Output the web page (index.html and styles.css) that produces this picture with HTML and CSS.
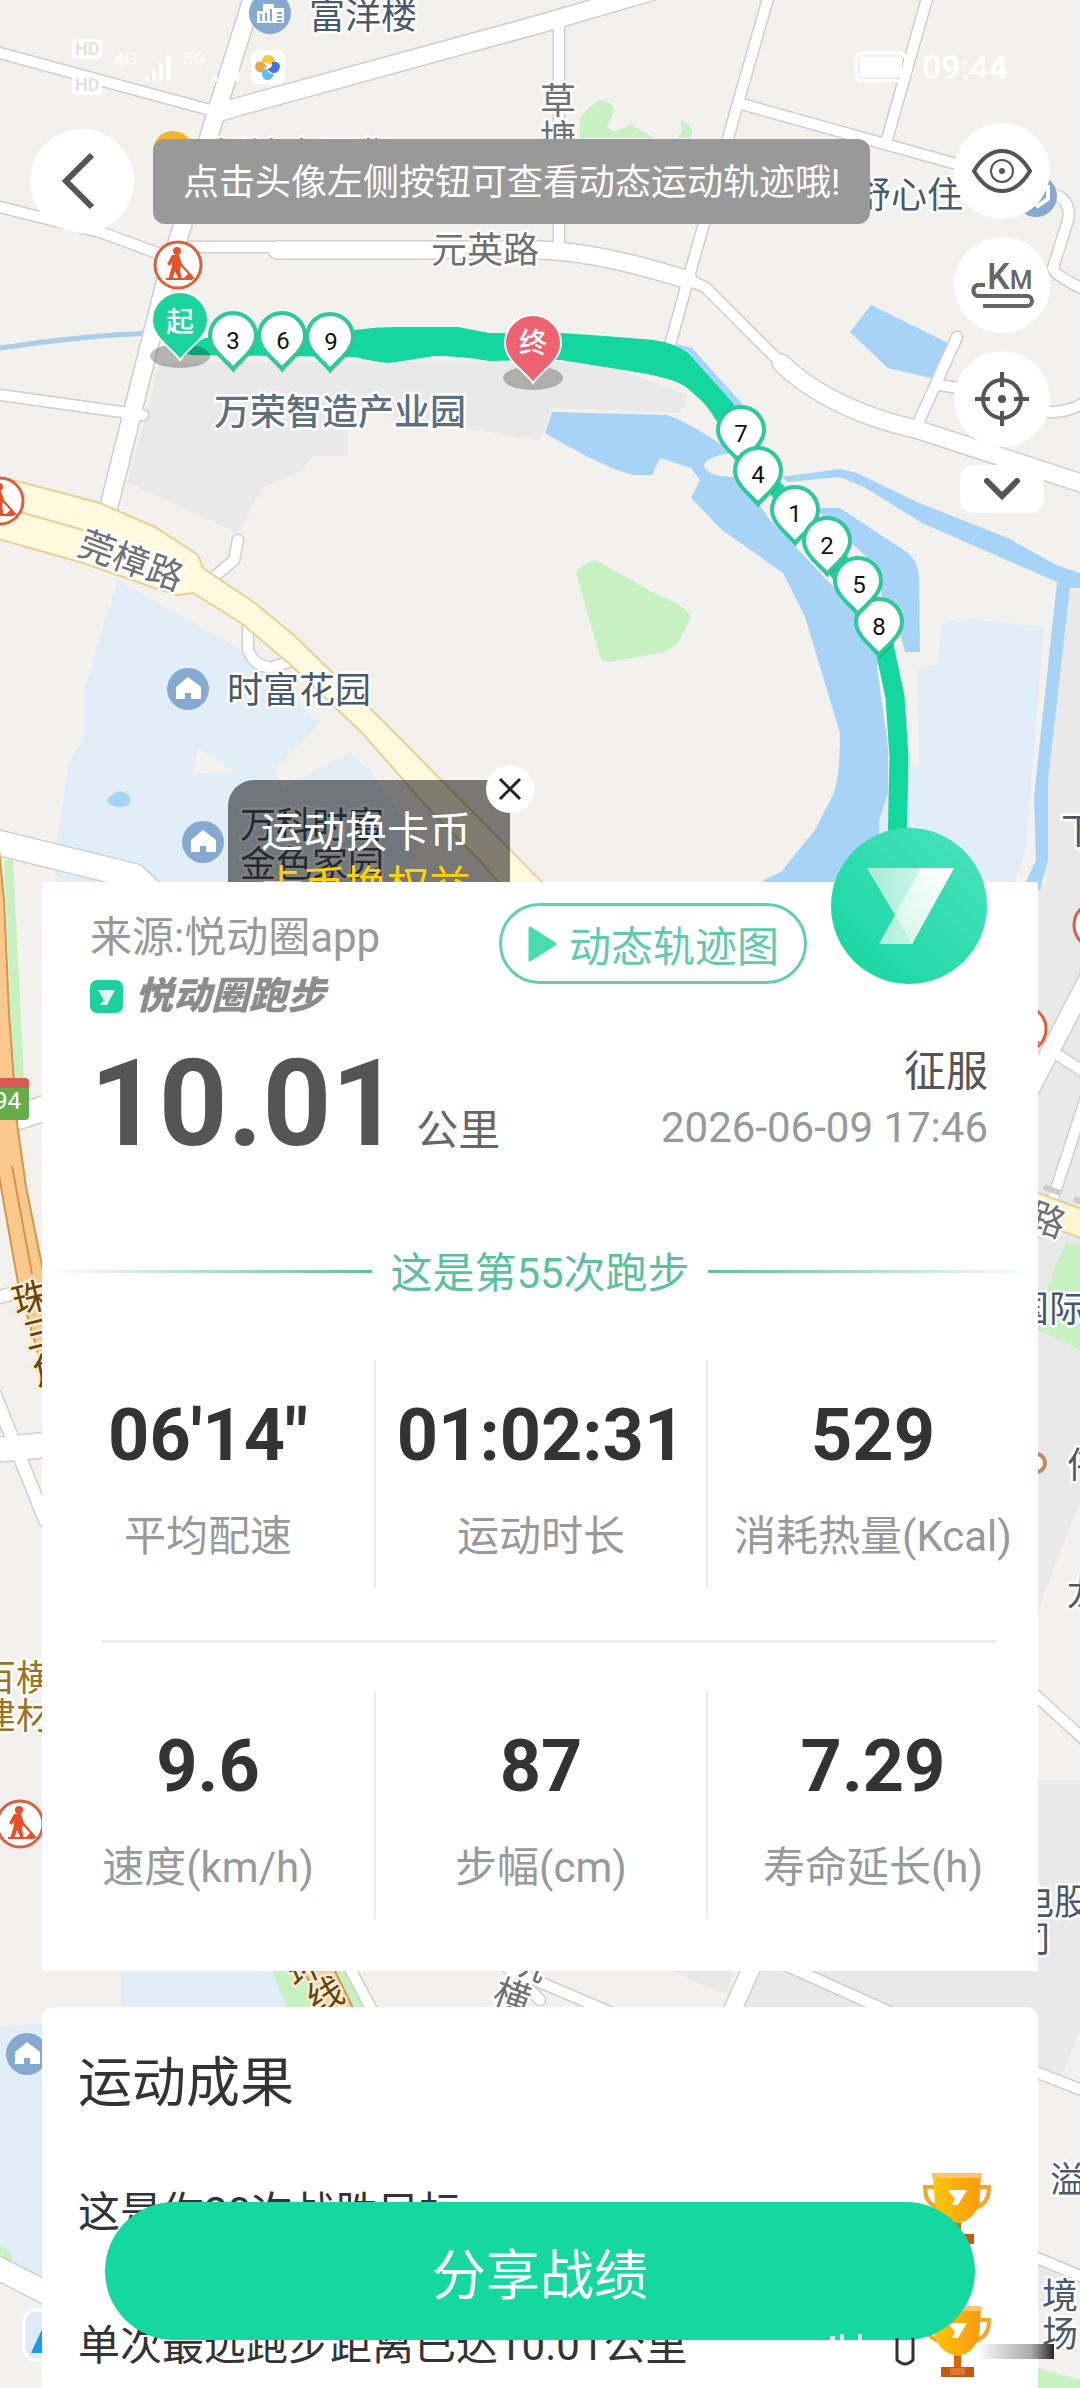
FILE: index.html
```html
<!DOCTYPE html>
<html lang="zh-CN">
<head>
<meta charset="utf-8">
<meta name="viewport" content="width=device-width, initial-scale=1">
<title>悦动圈跑步</title>
<link rel="stylesheet" href="styles.css">
</head>
<body>

<svg class="map" viewBox="0 0 1080 2388" preserveAspectRatio="xMidYMin slice" aria-hidden="true">
  <defs>
    <symbol id="work" viewBox="0 0 50 50" overflow="visible">
      <circle cx="25" cy="25" r="23" fill="#fff" stroke="#dc5f3e" stroke-width="3"/>
      <circle cx="24" cy="11" r="4" fill="#e8502a"/>
      <path d="M19 15l7 0 3 9 8 9 5 6h-12l5-5-7-8-1 4 2 10h-3l-4-9-3 9h-4l4-14v-4l-2 4-3-2z M13 38h26v2H13z" fill="#e8502a"/>
    </symbol>
    <symbol id="home" viewBox="0 0 42 42">
      <circle cx="21" cy="21" r="21" fill="#86a9d1"/>
      <path d="M21 9l13 10v12H24v-6h-6v6H9V19z" fill="#fff"/>
    </symbol>
    <symbol id="pin" viewBox="0 0 52 62" overflow="visible">
      <path d="M26 59C20 51 3 39 3 25a23 23 0 0 1 46 0C49 39 32 51 26 59z" fill="#000" opacity=".15" transform="translate(1 3)"/>
      <path d="M26 58C20 50 3 39 3 25a23 23 0 0 1 46 0C49 39 32 50 26 58z" fill="#fff" stroke="#2dc99c" stroke-width="4"/>
    </symbol>
  </defs>

  <rect width="1080" height="2388" fill="#f2f1ed"/>

  <!-- blocks -->
  <g fill="#e9e9e9">
    <path d="M160 362L600 362 688 395 681 413 552 408 540 440 348 410V456H313L303 470 263 487 238 533 127 482z"/>
    <path d="M1070 590H1080V1500L1038 1610V885H1046L1048 780z"/>
    <path d="M750 1960H1080V2030L1060 2080 740 2010z"/>
    <path d="M670 1971H733L728 1995zM1038 2258L1075 2275 1060 2310H1038zM1038 1780H1080V2000H1038z"/>
  </g>
  <g fill="#e1eef8">
    <path d="M118 580L241 650 320 723 275 770 282 787 351 753 372 773 420 840 400 890H55L57 840 69 763 84 737V690L90 670z"/>
    <path d="M941 625L957 618 1044 627 1026 847 1015 885H879V767H919L917 670 938 663z"/>
    <path d="M120 1960H290V2010H122zM0 2028L42 2023V2280L0 2260z"/>
  </g>
  <path d="M198 747L240 774 193 773z" fill="#f2f1ed"/>
  <path d="M108 799q12-14 22-2 3 10-10 10-16-2-12-8z" fill="#a7d3f7"/>
  <g fill="#c8f1c1">
    <path d="M576 573Q578 566 595 560L654 593Q689 607 691 618L678 643Q670 650 660 653L610 662Q602 662 600 657z"/>
    <path d="M579 138L581 117Q592 102 602 100 613 101 614 112L607 126Q611 134 620 129L631 125 654 138z"/>
    <path d="M681 120Q697 128 690 138H677L682 132z"/>
    <path d="M4 860H13L24 1080H13z"/>
    <path d="M270 1965H345L366 2010H288z"/>
    <path d="M1066 1242L1080 1245V1350L1038 1330V1310zM0 2246q14 4 12 14l-12-2zM1038 2368L1080 2380V2388H1038z"/>
  </g>

  <!-- water -->
  <g fill="#a7d3f7">
    <path d="M552 412L667 415Q684 420 722 445L738 452Q705 456 704 466 706 476 733 477L760 507 815 508 840 508 908 553Q918 562 919 577L920 652H905L895 615 877 667 888 747V793L879 820V893H758L764 880 781 872 815 830 834 793Q840 775 840 733L805 617 783 573 722 530 691 498 700 480 691 468 660 458 652 475H633Q600 466 545 433z"/>
    <path d="M781 477L840 469 857 473 919 503 1008 538 1056 565 1080 573V588H1070L1048 780V860L1040 890H1022L1036 860 1034 797 1057 582 922 523 864 487 840 477 788 482z"/>
    <path d="M871 305L948 343 931 378 888 368 850 332z"/>
    <path d="M676 344L692 348 744 406 730 412z"/>
  </g>
  <path d="M756 500L815 508 880 570 884 640 770 520z" fill="#f2f1ed"/>
  <path d="M0 348Q80 336 150 333" fill="none" stroke="#a9cdea" stroke-width="5"/>

  <!-- roads: casing first, then fill -->
  <g fill="none" stroke="#cfcfcf" stroke-linejoin="round" stroke-linecap="round">
    <g stroke-width="20">
      <path d="M255-10L217 110 165 283 108 510"/>
      <path d="M217 113L241 106 540 24 650-8"/>
      <path d="M277 250H540Q600 252 688 280"/>
      <path d="M781 363Q830 410 919 430L1090 486"/>
      <path d="M-5 842L134 876 160 900" stroke-width="27"/>
      <path d="M-10 2264L60 2300" stroke-width="25"/>
      <path d="M755 1960L728 2020M1030 1090L1090 975"/>
    </g>
    <g stroke-width="13">
      <path d="M0 53L210 110M0 207L103 233 160 254M190 247H277M0 395L143 415M559 24V250"/>
      <path d="M769-5L738 103 688 280 670 345M738 103L960 165M928-5L886 143"/>
      <path d="M688 280L705 287 781 363M1050 193Q1072 198 1068 220L1053 268Q1054 276 1090 292"/>
      <path d="M957 337L915 430M940 385L1000 395Q1050 425 1085 402"/>
      <path d="M238 540L234 560 214 577M248 625V650Q255 668 272 667L295 660"/>
      <path d="M348 1965L372 2010M505 1965L540 2000M530 1978L610 2012M785 1965L890 2012"/>
      <path d="M1058 1055L1090 1076M1090 1085L1042 1232M1030 1690L1090 1745M1030 2070L1090 2093M1030 2255L1090 2280"/>
      <path d="M-5 1298L45 1285M-5 1395L45 1520" stroke-width="15"/>
      <path d="M-5 1450L45 1445M-5 1125L45 1108" stroke-width="27"/>
    </g>
  </g>
  <g fill="none" stroke="#fff" stroke-linejoin="round" stroke-linecap="round">
    <g stroke-width="17">
      <path d="M255-10L217 110 165 283 108 510"/>
      <path d="M217 113L241 106 540 24 650-8"/>
      <path d="M277 250H540Q600 252 688 280"/>
      <path d="M781 363Q830 410 919 430L1090 486"/>
      <path d="M-5 842L134 876 160 900" stroke-width="24"/>
      <path d="M-10 2264L60 2300" stroke-width="22"/>
      <path d="M755 1960L728 2020M1030 1090L1090 975"/>
    </g>
    <g stroke-width="10">
      <path d="M0 53L210 110M0 207L103 233 160 254M190 247H277M0 395L143 415M559 24V250"/>
      <path d="M769-5L738 103 688 280 670 345M738 103L960 165M928-5L886 143"/>
      <path d="M688 280L705 287 781 363M1050 193Q1072 198 1068 220L1053 268Q1054 276 1090 292"/>
      <path d="M957 337L915 430M940 385L1000 395Q1050 425 1085 402"/>
      <path d="M238 540L234 560 214 577M248 625V650Q255 668 272 667L295 660"/>
      <path d="M348 1965L372 2010M505 1965L540 2000M530 1978L610 2012M785 1965L890 2012"/>
      <path d="M1058 1055L1090 1076M1090 1085L1042 1232M1030 1690L1090 1745M1030 2070L1090 2093M1030 2255L1090 2280"/>
      <path d="M-5 1298L45 1285M-5 1395L45 1520" stroke-width="12"/>
      <path d="M-5 1450L45 1445M-5 1125L45 1108" stroke-width="24"/>
    </g>
  </g>

  <!-- main roads -->
  <path d="M-5 478L21 482 100 503 155 527 198 555 203 568 255 603 296 637 337 677 379 717 540 880 550 890H505L482 863 430 810 362 733 293 667 241 623 193 593 177 595 152 587 83 563-5 538z" fill="#fffade" stroke="#edce93" stroke-width="2"/>
  <path d="M20 512L83 530" stroke="#edce93" stroke-width="2"/>
  <path d="M1030 1190L1090 1212V1242L1030 1218z" fill="#fff6cf" stroke="#e8cf98" stroke-width="2"/>
  <path d="M1044 1187l16 6M1074 1199l14 5" stroke="#ccc" stroke-width="6"/>
  <path d="M-4 820L4 900 9 1013 17 1123 26 1187 46 1285 60 1350 40 1360 18 1283-2 1170z" fill="#fbc88e" stroke="#d8944a" stroke-width="2"/>
  <path d="M12 1166L32 1274" stroke="#d8944a" stroke-width="2"/>
  <path d="M300 1965H332L354 2010H326z" fill="#fbd0a0" stroke="#d8944a" stroke-width="2"/>

  <!-- labels -->
  <g class="label">
    <text x="309" y="29">富洋楼</text>
    <text x="855" y="208">舒心住宅</text>
    <text x="214" y="425" class="area">万荣智造产业园</text>
    <text x="227" y="703">时富花园</text>
    <text x="240" y="838">万科时富</text>
    <text x="240" y="877">金色家园</text>
    <text x="1061" y="844">下</text>
    <text x="1013" y="1322">国际</text>
    <text x="1067" y="1478">伟</text>
    <text x="1067" y="1606">龙</text>
    <text x="1018" y="1915">电股</text>
    <text x="1015" y="1952">司</text>
    <text x="1050" y="2193">溢</text>
    <text x="1042" y="2309">境</text>
    <text x="1042" y="2347">场</text>
  </g>
  <g class="label road">
    <text x="431" y="263">元英路</text>
    <text x="540" y="114">草</text>
    <text x="540" y="151">塘</text>
    <text x="76" y="554" transform="rotate(20 76 554)">莞樟路</text>
    <text x="1026" y="1226" transform="rotate(20 1026 1226)">路</text>
    <text x="508" y="1970" transform="rotate(20 508 1970)">坑</text>
    <text x="491" y="2002" transform="rotate(20 491 2002)">横</text>
  </g>
  <g class="label brown">
    <text x="16" y="1315" transform="rotate(-14 16 1315)">珠</text>
    <text x="27" y="1350" transform="rotate(-14 27 1350)">三</text>
    <text x="36" y="1386" transform="rotate(-14 36 1386)">角</text>
    <text x="294" y="1987" transform="rotate(-24 294 1987)">环</text>
    <text x="314" y="2014" transform="rotate(-24 314 2014)">线</text>
  </g>
  <g class="label shop">
    <text x="212" y="169">新铭宏百货</text>
    <text x="-20" y="1691">百横</text>
    <text x="-20" y="1729">建材</text>
  </g>

  <circle cx="173" cy="151" r="20" fill="#f7b52c"/>
  <circle cx="270" cy="13" r="21" fill="#86a9d1"/>
  <path d="M257 23V11h6V4h11v4h10v15z" fill="#fff"/>
  <path d="M261 21v-7M266 21v-8M271 21V9M277 13h5M277 17h5M277 21h5" stroke="#86a9d1" stroke-width="2"/>
  <circle cx="1036" cy="196" r="21" fill="#86a9d1"/>
  <path d="M1048 185v14l-12 8" fill="none" stroke="#fff" stroke-width="4"/>
  <use href="#home" x="167" y="668" width="42" height="42"/>
  <use href="#home" x="182" y="821" width="42" height="42"/>
  <use href="#home" x="6" y="2033" width="42" height="42"/>
  <use href="#work" x="153" y="240" width="50" height="50"/>
  <use href="#work" x="-25" y="476" width="50" height="50"/>
  <use href="#work" x="-5" y="1799" width="50" height="50"/>
  <use href="#work" x="1072" y="900" width="50" height="50"/>
  <use href="#work" x="998" y="1004" width="50" height="50"/>
  <circle cx="1036" cy="1463" r="9" fill="#fff" stroke="#b98d67" stroke-width="4"/>
  <path d="M-5 1078H25q4 0 4 4v6H-5z" fill="#dc5a55"/>
  <path d="M-5 1088H29v28q0 4-4 4H-5z" fill="#63ad4b"/>
  <text x="-6" y="1109" class="badge">94</text>
  <rect x="24" y="2310" width="50" height="50" rx="12" fill="#dfeaf9" stroke="#fff" stroke-width="3"/>
  <path d="M31 2353L44 2325V2353z" fill="#1a9bf0"/>

  <!-- run track -->
  <path d="M180 352L205 338H320L355 330Q375 327 396 327H458L489 333H561L605 336 654 340Q675 343 688 353L733 403 755 445 778 480 810 512 850 560 889 640 885 650 716 420Q705 402 695 395 685 384 671 380 655 375 636 372L561 360H530L489 361Q460 356 434 356 410 360 389 363 370 361 355 357L191 355z" fill="#14d69f"/>
  <path d="M884 645L895 697 899 757 897 850" fill="none" stroke="#14d69f" stroke-width="19"/>
  <g fill="#000" opacity=".25">
    <ellipse cx="180" cy="356" rx="30" ry="12"/>
    <ellipse cx="533" cy="378" rx="30" ry="12"/>
  </g>
  <g stroke="#fff" stroke-width="2">
    <path d="M180 360C172 348 152 338 152 320a28 28 0 0 1 56 0C208 338 188 348 180 360z" fill="#1bd39c"/>
    <path d="M533 383C525 371 505 361 505 343a28 28 0 0 1 56 0C561 361 541 371 533 383z" fill="#ef6270"/>
  </g>
  <g class="flag">
    <text x="180" y="332">起</text>
    <text x="533" y="353">终</text>
  </g>
  <g class="pins">
    <use href="#pin" x="207" y="311" width="52" height="62"/><text x="233" y="349">3</text>
    <use href="#pin" x="256" y="311" width="52" height="62"/><text x="283" y="349">6</text>
    <use href="#pin" x="304" y="312" width="52" height="62"/><text x="331" y="350">9</text>
    <use href="#pin" x="715" y="405" width="52" height="62"/><text x="741" y="442">7</text>
    <use href="#pin" x="732" y="446" width="52" height="62"/><text x="758" y="483">4</text>
    <use href="#pin" x="769" y="485" width="52" height="62"/><text x="795" y="522">1</text>
    <use href="#pin" x="801" y="516" width="52" height="62"/><text x="827" y="554">2</text>
    <use href="#pin" x="853" y="597" width="52" height="62"/><text x="879" y="635">8</text>
    <use href="#pin" x="832" y="556" width="52" height="62"/><text x="859" y="593">5</text>
  </g>
</svg>

<div class="page">

  <div class="statusbar">
    <div class="hd"><span>HD</span><span>HD</span></div>
    <div class="sim">4G</div>
    <svg width="30" height="28" viewBox="0 0 30 28" fill="#fff"><path d="M0 23h4v5H0zM7 17h4v11H7zM14 10h4v18h-4zM21 2h5v26h-5z"/></svg>
    <div class="sim">5G</div>
    <svg width="30" height="28" viewBox="0 0 30 28" fill="#fff"><path d="M0 23h4v5H0zM7 17h4v11H7zM14 10h4v18h-4zM21 2h5v26h-5z"/></svg>
    <svg class="app" width="34" height="34" viewBox="0 0 34 34">
      <rect width="34" height="34" rx="8" fill="#fff"/>
      <path d="M11 14q-1-9 6-9t7 7l-5 3q-3-4-8-1z" fill="#f8c93c"/>
      <path d="M14 22q-9 2-10-5 1-7 7-5l5 4q-4 1-2 6z" fill="#eba544"/>
      <path d="M21 12q7-1 8 4-1 8-8 7l-5-4q6-1 5-7z" fill="#3d74e0"/>
      <path d="M23 24q-2 6-7 6t-5-8l4-4q2 6 8 6z" fill="#5cbcf7"/>
    </svg>
    <svg class="battery" width="60" height="32" viewBox="0 0 60 32">
      <rect x="2" y="2" width="50" height="28" rx="6" fill="none" stroke="#fff" stroke-width="3"/>
      <rect x="6" y="6" width="42" height="20" rx="3" fill="#fff"/>
      <path d="M55 11h3v10h-3z" fill="#fff"/>
    </svg>
    <time>09:44</time>
  </div>

  <header class="header">
    <button type="button" class="round back" aria-label="返回">
      <svg width="40" height="60" viewBox="0 0 40 60"><path d="M30 4L4 30 30 56" fill="none" stroke="#555" stroke-width="6"/></svg>
    </button>
    <p class="toast">点击头像左侧按钮可查看动态运动轨迹哦!</p>
    <div class="tools">
      <button type="button" class="round" aria-label="显示">
        <svg width="60" height="46" viewBox="0 0 60 46" fill="none" stroke="#555" stroke-width="3">
          <path d="M2 23Q14 3 30 3T58 23Q46 43 30 43T2 23z" stroke-width="4"/>
          <circle cx="30" cy="23" r="11" stroke-width="2"/>
          <circle cx="30" cy="23" r="3" fill="#555" stroke="none"/>
        </svg>
      </button>
      <button type="button" class="round" aria-label="公里">
        <svg width="66" height="50" viewBox="0 0 66 50">
          <path d="M16 25H8a6 6 0 0 0 0 11H58a5 5 0 0 1 0 10H14" fill="none" stroke="#666" stroke-width="4"/>
          <text x="18" y="29" class="km">K<tspan class="km-small">M</tspan></text>
        </svg>
      </button>
      <button type="button" class="round" aria-label="定位">
        <svg width="54" height="54" viewBox="0 0 54 54" fill="none" stroke="#555" stroke-width="4">
          <circle cx="27" cy="27" r="19"/>
          <path d="M27 0V15M27 39V54M0 27H15M39 27H54"/>
          <circle cx="27" cy="27" r="4" fill="#555" stroke="none"/>
        </svg>
      </button>
      <button type="button" class="more" aria-label="展开">
        <svg width="36" height="22" viewBox="0 0 36 22"><path d="M3 3L18 18 33 3" fill="none" stroke="#555" stroke-width="6" stroke-linecap="round"/></svg>
      </button>
    </div>
  </header>

  <aside class="promo">
    <div class="promo-text">
      <p>运动换卡币</p>
      <p class="gold">卡币换权益</p>
    </div>
    <button type="button" class="close" aria-label="关闭">
      <svg width="24" height="24" viewBox="0 0 24 24"><path d="M2 2L22 22M22 2L2 22" stroke="#222" stroke-width="3"/></svg>
    </button>
  </aside>

  <section class="card">
    <div class="card-head">
      <div class="source">
        <p>来源:悦动圈app</p>
        <div class="brand">
          <svg width="33" height="33" viewBox="0 0 33 33"><rect width="33" height="33" rx="7" fill="#1bd29f"/><path d="M8 10H25L17 25H10L14 20z" fill="#e3fbf3"/></svg>
          <span>悦动圈跑步</span>
        </div>
      </div>
      <button type="button" class="replay">
        <svg width="30" height="36" viewBox="0 0 30 36"><path d="M3 2L28 18 3 34z" fill="#4adcb0" stroke="#4adcb0" stroke-width="3" stroke-linejoin="round"/></svg>
        动态轨迹图
      </button>
      <svg class="avatar" width="156" height="156" viewBox="0 0 156 156">
        <defs>
          <linearGradient id="av" x1="0" y1="1" x2="1" y2="0"><stop offset="0" stop-color="#14d69f"/><stop offset="1" stop-color="#4ce3bd"/></linearGradient>
          <linearGradient id="ya" x1="0" y1="0" x2="1" y2="0"><stop offset="0" stop-color="#a4ecd5"/><stop offset="1" stop-color="#e6f9f3"/></linearGradient>
          <linearGradient id="yb" x1="1" y1="0" x2="0" y2="1"><stop offset="0" stop-color="#fff"/><stop offset="1" stop-color="#d5f6eb"/></linearGradient>
        </defs>
        <circle cx="78" cy="78" r="78" fill="url(#av)"/>
        <path d="M36 40H123L81 116H48L64 87z" fill="url(#ya)"/>
        <path d="M90 40H123L81 116 64 87z" fill="url(#yb)"/>
      </svg>
    </div>

    <div class="summary">
      <div class="distance"><strong>10.01</strong><span>公里</span></div>
      <div class="who">
        <p class="name">征服</p>
        <time>2026-06-09 17:46</time>
      </div>
    </div>

    <div class="count"><span>这是第55次跑步</span></div>

    <dl class="stats">
      <div><dd>06'14"</dd><dt>平均配速</dt></div>
      <div><dd>01:02:31</dd><dt>运动时长</dt></div>
      <div><dd>529</dd><dt>消耗热量(Kcal)</dt></div>
    </dl>
    <hr>
    <dl class="stats">
      <div><dd>9.6</dd><dt>速度(km/h)</dt></div>
      <div><dd>87</dd><dt>步幅(cm)</dt></div>
      <div><dd>7.29</dd><dt>寿命延长(h)</dt></div>
    </dl>
  </section>

  <section class="card results">
    <h2>运动成果</h2>
    <ul>
      <li>
        <span>这是你20次战胜目标</span>
        <svg class="cup" width="70" height="72" viewBox="0 0 70 72">
          <defs><linearGradient id="gold"><stop offset="0" stop-color="#fdc507"/><stop offset="1" stop-color="#fb9a10"/></linearGradient></defs>
          <path d="M13 15H3q0 18 15 21M57 15H67q0 18-15 21" fill="none" stroke="#f3a52c" stroke-width="4"/>
          <path d="M32 48h7v14h-7z" fill="#d9660f"/>
          <path d="M11 4H59L57 32Q52 48 36 51 18 48 13 32z" fill="url(#gold)"/>
          <path d="M10 1H60V6H10z" fill="#fcc376"/>
          <path d="M26 18H45L36 33H30L33 27z" fill="#fff"/>
          <path d="M19 62H52V72H19z" fill="#c35a12"/><path d="M28 63H43V70H28z" fill="#dd7631"/>
        </svg>
      </li>
      <li>
        <span>单次最远跑步距离已达10.01公里</span>
        <svg class="cup" width="70" height="72" viewBox="0 0 70 72">
          <path d="M13 15H3q0 18 15 21M57 15H67q0 18-15 21" fill="none" stroke="#f3a52c" stroke-width="4"/>
          <path d="M32 48h7v14h-7z" fill="#d9660f"/>
          <path d="M11 4H59L57 32Q52 48 36 51 18 48 13 32z" fill="url(#gold)"/>
          <path d="M10 1H60V6H10z" fill="#fcc376"/>
          <path d="M26 18H45L36 33H30L33 27z" fill="#fff"/>
          <path d="M19 62H52V72H19z" fill="#c35a12"/><path d="M28 63H43V70H28z" fill="#dd7631"/>
        </svg>
      </li>
    </ul>
  </section>
</div>

<button type="button" class="share">分享战绩</button>

<svg class="smudge" width="232" height="34" viewBox="0 0 232 34" aria-hidden="true">
  <defs>
    <linearGradient id="sa"><stop offset="0" stop-color="#fff" stop-opacity="0"/><stop offset=".3" stop-color="#fff" stop-opacity=".9"/><stop offset="1" stop-color="#fff" stop-opacity=".8"/></linearGradient>
    <linearGradient id="sb"><stop offset="0" stop-color="#777" stop-opacity="0"/><stop offset=".7" stop-color="#888" stop-opacity=".7"/><stop offset="1" stop-color="#222"/></linearGradient>
  </defs>
  <path d="M0 6H56V26H0z" fill="url(#sa)"/>
  <path d="M8 2h5v8H8zM18 0h4v10h-4zM36 0h4v10h-4z" fill="#fff" opacity=".8"/>
  <path d="M75 4V26Q83 34 91 26V4" fill="none" stroke="#333" stroke-width="3"/>
  <path d="M155 10H232V25H155z" fill="url(#sb)"/>
</svg>

</body>
</html>
```
FILE: styles.css
```css
* {
  box-sizing: border-box;
}

body {
  margin: 0;
  position: relative;
  font-family: Roboto, "Noto Sans CJK SC", sans-serif;
  font-size: 42px;
  color: #333;
  background: #f2f1ed;
}

p, h2, ul, dl, dd {
  margin: 0;
  padding: 0;
}

button {
  font: inherit;
  border: none;
  padding: 0;
  cursor: pointer;
}

svg {
  display: block;
  flex: none;
}

/* map */
.map {
  position: absolute;
  left: 0;
  top: 0;
  width: 100%;
  height: 100%;
}

.label text {
  font-size: 36px;
  fill: #47596b;
  stroke: #fff;
  stroke-width: 5px;
  stroke-linejoin: round;
  paint-order: stroke;
}

.label .area {
  font-weight: 500;
  fill: #5f6f7f;
}

.road text {
  fill: #707070;
}

.brown text {
  fill: #664410;
  stroke: #fdecd0;
}

.shop text {
  fill: #9a7223;
}

.badge {
  font-size: 24px;
  fill: #fff;
}

.flag text {
  font-size: 28px;
  font-weight: 500;
  fill: #fff;
  text-anchor: middle;
}

.pins text {
  font-size: 24px;
  fill: #111;
  text-anchor: middle;
}

/* page */
.page {
  position: relative;
  display: flex;
  flex-direction: column;
  min-height: 100vh;
}

.statusbar {
  display: flex;
  align-items: center;
  height: 123px;
  padding: 10px 72px 0;
  color: #fff;
  gap: 8px;
}

.hd {
  display: flex;
  flex-direction: column;
  gap: 16px;
  margin-right: 4px;
}

.hd span {
  padding: 0 3px;
  border-radius: 4px;
  background: #fff;
  color: #e4e3df;
  font-size: 18px;
  line-height: 20px;
  font-weight: 700;
}

.sim {
  font-size: 18px;
  line-height: 16px;
  margin-bottom: 16px;
}

.battery {
  margin-left: auto;
}

.statusbar time {
  font-size: 34px;
  font-weight: 500;
  line-height: 40px;
}

.header {
  display: flex;
  align-items: flex-start;
  padding: 0 30px;
}

.round {
  display: flex;
  align-items: center;
  justify-content: center;
  width: 96px;
  height: 96px;
  border-radius: 50%;
  background: #fff;
}

.back {
  flex: none;
  width: 104px;
  height: 104px;
  margin-top: 6px;
}

.toast {
  margin: 16px 0 0 19px;
  padding: 3px 30px 0;
  border-radius: 12px;
  background: #999;
  color: #fff;
  font-size: 36px;
  line-height: 82px;
  white-space: nowrap;
}

.tools {
  display: flex;
  flex-direction: column;
  align-items: center;
  gap: 18px;
  margin-left: auto;
}

.km {
  font-size: 36px;
  font-weight: 500;
  fill: #666;
}

.km-small {
  font-size: 26px;
}

.more {
  display: flex;
  align-items: center;
  justify-content: center;
  width: 84px;
  height: 48px;
  border-radius: 14px;
  background: #fff;
}

.promo {
  position: relative;
  width: 282px;
  height: 102px;
  margin: 267px 0 0 228px;
}

.promo-text {
  height: 100%;
  padding: 26px 0 0 33px;
  overflow: hidden;
  border-radius: 26px 0 0 0;
  background: rgba(0, 0, 0, .5);
  color: #fff;
  line-height: 54px;
}

.promo .gold {
  color: #ffd200;
}

.close {
  position: absolute;
  top: -15px;
  right: -24px;
  display: flex;
  align-items: center;
  justify-content: center;
  width: 48px;
  height: 48px;
  border-radius: 50%;
  background: #fff;
}

/* run card */
.card {
  margin: 0 42px;
  background: #fff;
}

.card-head {
  display: flex;
  align-items: flex-start;
  padding: 0 51px 0 48px;
  gap: 24px;
}

.source {
  flex: 1;
  padding-top: 26px;
  line-height: 60px;
  color: #999;
  white-space: nowrap;
}

.brand {
  display: flex;
  align-items: center;
  gap: 12px;
  margin-top: 10px;
  font-size: 38px;
  line-height: 36px;
  font-weight: 900;
  font-style: italic;
  color: #8c8c8c;
}

.replay {
  display: flex;
  align-items: center;
  justify-content: center;
  gap: 12px;
  width: 308px;
  height: 81px;
  margin-top: 21px;
  border: 3px solid #63cfb1;
  border-radius: 41px;
  background: #fff;
  color: #5fcbac;
  white-space: nowrap;
}

.avatar {
  margin-top: -54px;
}

.summary {
  display: flex;
  justify-content: space-between;
  align-items: flex-start;
  margin-top: 30px;
  padding: 0 50px 0 48px;
}

.distance {
  display: flex;
  align-items: baseline;
  gap: 16px;
  color: #666;
}

.distance strong {
  font-size: 120px;
  line-height: 120px;
  color: #555;
}

.distance span {
  line-height: 60px;
}

.who {
  line-height: 56px;
  text-align: right;
  color: #999;
}

.name {
  color: #555;
}

.count {
  display: flex;
  align-items: center;
  gap: 18px;
  margin-top: 76px;
  line-height: 56px;
  color: #5cbf9f;
}

.count span {
  padding-top: 6px;
}

.count::before,
.count::after {
  content: "";
  flex: 1;
  height: 3px;
  background: linear-gradient(to right, #fff, #5fbf9f);
}

.count::after {
  background: linear-gradient(to left, #fff, #5fbf9f);
}

.stats {
  display: grid;
  grid-template-columns: repeat(3, 1fr);
  margin-top: 58px;
  text-align: center;
}

.stats div {
  display: flex;
  flex-direction: column;
  gap: 35px;
  padding: 40px 0 21px;
  white-space: nowrap;
}

.stats div + div {
  border-left: 2px solid #ebebeb;
}

.stats dd {
  font-size: 72px;
  line-height: 72px;
  font-weight: 700;
}

.stats dt {
  line-height: 60px;
  color: #999;
}

.card hr {
  height: 3px;
  margin: 52px 42px 0 60px;
  border: none;
  background: #ebebeb;
}

.card hr + .stats {
  margin-top: 48px;
  margin-bottom: 52px;
}

/* results card */
.results {
  flex: 1;
  margin-top: 36px;
  padding: 41px 46px 0 36px;
  border-radius: 12px 12px 0 0;
}

.results h2 {
  font-size: 54px;
  line-height: 72px;
  font-weight: 400;
}

.results ul {
  margin-top: 52px;
  list-style: none;
}

.results li {
  display: flex;
  align-items: center;
  justify-content: space-between;
  height: 72px;
}

.results li + li {
  margin-top: 61px;
}

.share {
  position: fixed;
  left: 105px;
  right: 105px;
  bottom: 48px;
  height: 138px;
  border-radius: 69px;
  background: #14d8a0;
  color: #fff;
  font-size: 54px;
}

.smudge {
  position: fixed;
  right: 26px;
  bottom: 20px;
}
```
